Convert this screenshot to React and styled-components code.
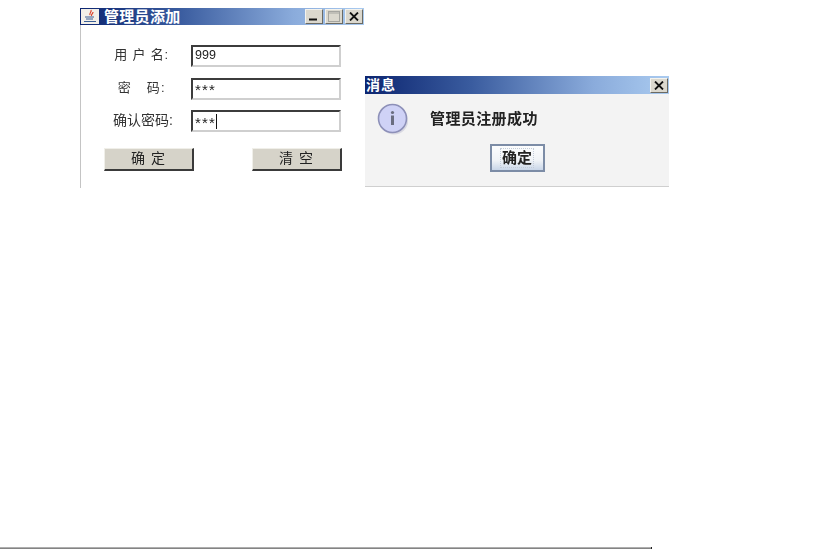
import React from 'react';
import styled, { createGlobalStyle } from 'styled-components';

const GlobalStyle = createGlobalStyle`
  html, body {
    margin: 0;
    padding: 0;
    background: #fff;
    overflow: hidden;
  }
`;

const cjk = `"Liberation Sans", "Noto Sans CJK SC", sans-serif`;

const Desktop = styled.div`
  position: relative;
  width: 819px;
  height: 549px;
  font-family: ${cjk};
  color: #222;
  filter: blur(0.3px);
`;

const Window = styled.div`
  position: absolute;
  left: ${(p) => p.$x}px;
  top: ${(p) => p.$y}px;
  width: ${(p) => p.$w}px;
  height: ${(p) => p.$h}px;
  display: flex;
  flex-direction: column;
`;

const TitleBar = styled.div`
  height: ${(p) => p.$h}px;
  flex: none;
  display: flex;
  align-items: center;
  gap: ${(p) => p.$gap}px;
  padding: 0 1px;
  background: linear-gradient(90deg, #0c2570 0%, #3a5c9f 35%, #8aabdb 75%, #aacbf0 100%);
`;

const TitleText = styled.span`
  flex: 1;
  color: #fff;
  font-size: ${(p) => p.$size}px;
  font-weight: 700;
  letter-spacing: ${(p) => p.$spacing}px;
  line-height: 16px;
`;

const CaptionGroup = styled.div`
  display: flex;
  gap: 2px;
`;

const CaptionButton = styled.div`
  width: 18px;
  height: 15px;
  box-sizing: border-box;
  display: flex;
  align-items: center;
  justify-content: center;
  background: #dbd8ce;
  border: 1px solid;
  border-color: #f4f3ee #6b6a63 #6b6a63 #f4f3ee;
`;

const FormBody = styled.div`
  flex: 1;
  border-left: 1px solid #c4c4c4;
  padding: 20px 22px 0 23px;
  display: flex;
  flex-direction: column;
`;

const FieldGrid = styled.div`
  display: grid;
  grid-template-columns: 87px 150px;
  grid-auto-rows: 22px;
  row-gap: 10.5px;
`;

const FieldLabel = styled.label`
  display: flex;
  align-items: center;
  justify-content: flex-end;
  height: 22px;
  padding-right: ${(p) => p.$pad}px;
  padding-bottom: 2px;
  box-sizing: border-box;
  font-size: ${(p) => p.$size}px;
  line-height: 16px;
  letter-spacing: ${(p) => p.$spacing}px;
  white-space: pre;
  color: #333;
`;

const FieldBox = styled.div`
  height: 22px;
  box-sizing: border-box;
  border: 2px solid;
  border-color: #3c3c3c #cfcfcf #cfcfcf #3c3c3c;
  padding: ${(p) => (p.$masked ? '3px 0 0 2px' : '0 0 3px 2px')};
  display: flex;
  align-items: center;
  background: #fff;
  font-size: ${(p) => (p.$masked ? '15px' : '12.5px')};
  letter-spacing: ${(p) => (p.$masked ? '1.2px' : '0')};
  line-height: 14px;
  color: #222;
`;

const Caret = styled.span`
  width: 1px;
  height: 15px;
  margin-top: -3px;
  background: #111;
`;

const ButtonRow = styled.div`
  margin-top: 16px;
  display: flex;
  justify-content: space-between;
  width: 238px;
`;

const FormButton = styled.div`
  width: 90px;
  height: 23px;
  box-sizing: border-box;
  display: flex;
  align-items: center;
  justify-content: center;
  padding-bottom: 3px;
  background: #d6d3c9;
  border: 1px solid;
  border-width: 1px 2px 2px 1px;
  border-color: #f0efe9 #3a3a3a #3a3a3a #f0efe9;
  font-size: 14px;
  line-height: 16px;
  letter-spacing: 1px;
  white-space: pre;
  color: #222;
`;

const DialogBody = styled.div`
  flex: 1;
  background: #f3f3f3;
  border-bottom: 1px solid #cfcfcf;
  display: flex;
  flex-direction: column;
  padding: 9px 0 0 12px;
`;

const MessageRow = styled.div`
  display: flex;
  align-items: center;
  gap: 21px;
`;

const MessageText = styled.span`
  font-size: 15px;
  font-weight: 700;
  letter-spacing: 0.4px;
  line-height: 18px;
  color: #222;
`;

const OkRow = styled.div`
  margin-top: 9px;
  padding-right: 12px;
  display: flex;
  justify-content: center;
`;

const OkButton = styled.div`
  width: 55px;
  height: 28px;
  box-sizing: border-box;
  border: 2px solid #7c8ca6;
  background: linear-gradient(180deg, #fbfcfd 0%, #f0f3f7 60%, #c9d6e8 100%);
  display: flex;
  align-items: center;
  justify-content: center;
  font-size: 15px;
  font-weight: 700;
  color: #222;
`;

const OkFocus = styled.span`
  line-height: 18px;
  padding: 0 1px;
  border: 1px dotted #c3ccd9;
`;

const BottomRule = styled.div`
  position: absolute;
  left: 0;
  bottom: 0;
  width: 651px;
  height: 2px;
  background: linear-gradient(180deg, #c4c4c4 0%, #6e6e6e 100%);
  border-right: 1px solid #222;
`;

const CloseIcon = () => (
  <svg width="10" height="9" viewBox="0 0 10 9">
    <path d="M1 0.5 L9 8.5 M9 0.5 L1 8.5" stroke="#111" strokeWidth="1.8" fill="none" />
  </svg>
);

const MinIcon = () => (
  <svg width="12" height="9" viewBox="0 0 12 9">
    <path d="M1 7.5 H9" stroke="#111" strokeWidth="2" fill="none" />
  </svg>
);

const MaxIcon = () => (
  <svg width="12" height="11" viewBox="0 0 12 11">
    <rect x="0.5" y="0.5" width="11" height="10" stroke="#a5a5a0" fill="none" />
    <path d="M0.5 2 H11.5" stroke="#a5a5a0" fill="none" />
  </svg>
);

const JavaIcon = () => (
  <svg width="18" height="15" viewBox="0 0 18 15">
    <rect width="18" height="15" fill="#f2efe8" />
    <path d="M10 1 C11 3 8 4 9 6 M12 3 C12 5 10 5 10.5 7" stroke="#d8402c" strokeWidth="1.2" fill="none" />
    <path d="M4 8 H13 M5 10 H12 M3 12.5 H15" stroke="#3b5f96" strokeWidth="1.1" fill="none" />
  </svg>
);

const InfoIcon = () => (
  <svg width="32" height="32" viewBox="0 0 32 32">
    <ellipse cx="17" cy="18" rx="14" ry="13.5" fill="#d9d9e2" />
    <circle cx="15.5" cy="15.5" r="14" fill="#cfd2f6" stroke="#8d90b8" strokeWidth="1.6" />
    <circle cx="15.5" cy="9.5" r="1.6" fill="#6a6d80" />
    <rect x="14" y="12.5" width="3" height="9.5" fill="#6a6d80" />
  </svg>
);

const fields = [
  { label: '用 户 名:', value: '999', pad: 22, size: 13, spacing: 0.8 },
  { label: '密   码:', value: '***', pad: 25, size: 13, spacing: 1.3, masked: true },
  { label: '确认密码:', value: '***', pad: 18, size: 14, spacing: 0, masked: true, caret: true },
];

const App = () => (
  <>
    <GlobalStyle />
    <Desktop>
      <Window $x={80} $y={8} $w={284} $h={180}>
        <TitleBar $h={17} $gap={5}>
          <JavaIcon />
          <TitleText $size={15} $spacing={0.3}>管理员添加</TitleText>
          <CaptionGroup>
            <CaptionButton><MinIcon /></CaptionButton>
            <CaptionButton><MaxIcon /></CaptionButton>
            <CaptionButton><CloseIcon /></CaptionButton>
          </CaptionGroup>
        </TitleBar>
        <FormBody>
          <FieldGrid>
            {fields.map((field) => (
              <React.Fragment key={field.label}>
                <FieldLabel $pad={field.pad} $size={field.size} $spacing={field.spacing}>{field.label}</FieldLabel>
                <FieldBox $masked={field.masked}>
                  {field.value}
                  {field.caret && <Caret />}
                </FieldBox>
              </React.Fragment>
            ))}
          </FieldGrid>
          <ButtonRow>
            <FormButton>确 定</FormButton>
            <FormButton>清 空</FormButton>
          </ButtonRow>
        </FormBody>
      </Window>

      <Window $x={365} $y={76} $w={304} $h={111}>
        <TitleBar $h={18} $gap={3}>
          <TitleText $size={14} $spacing={1}>消息</TitleText>
          <CaptionButton><CloseIcon /></CaptionButton>
        </TitleBar>
        <DialogBody>
          <MessageRow>
            <InfoIcon />
            <MessageText>管理员注册成功</MessageText>
          </MessageRow>
          <OkRow>
            <OkButton><OkFocus>确定</OkFocus></OkButton>
          </OkRow>
        </DialogBody>
      </Window>

      <BottomRule />
    </Desktop>
  </>
);

export default App;
